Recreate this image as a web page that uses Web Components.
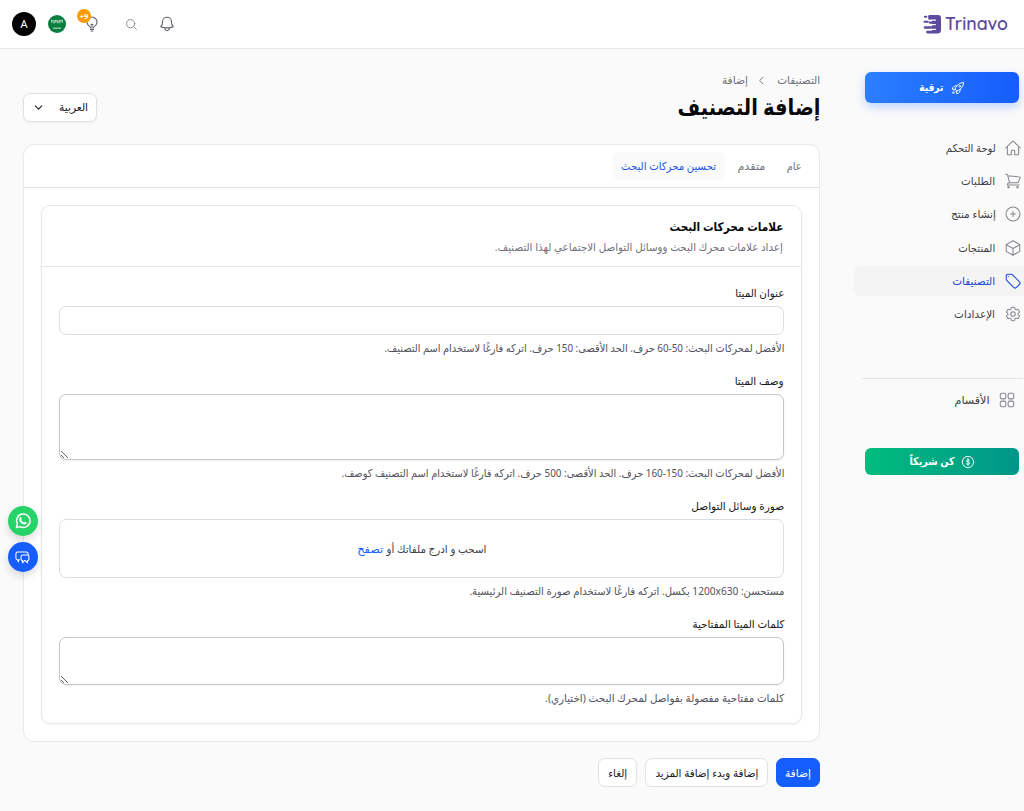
<!DOCTYPE html>
<html lang="ar" dir="rtl">
<head>
<meta charset="utf-8">
<title>إضافة التصنيف</title>
<style>
html,body{margin:0;height:811px;overflow:hidden}
body{background:#fafafa;color:#18181b;font-family:"Noto Sans","DejaVu Sans",sans-serif;font-size:11px}
</style>
</head>
<body>
<admin-page></admin-page>
<script>
const define = (name, html, setup) => customElements.define(name, class extends HTMLElement {
  connectedCallback() {
    if (this.shadowRoot) return;
    this.attachShadow({ mode: 'open' }).innerHTML = typeof html === 'function' ? html(this) : html;
    if (setup) setup(this);
  }
});

const icons = {
  home: '<path d="M2.25 12 11.2 3.05a1.1 1.1 0 0 1 1.6 0L21.75 12M4.5 9.75v10.1c0 .65.5 1.15 1.1 1.15h4.15v-4.9c0-.6.5-1.1 1.1-1.1h2.3c.6 0 1.1.5 1.1 1.1V21h4.15c.6 0 1.1-.5 1.1-1.15V9.75"/>',
  cart: '<path d="M2.25 3h1.4c.5 0 .95.35 1.1.85L7.5 14.25m0 0a3 3 0 0 0-3 3h15.75m-12.75-3h11.2c1.15-2.3 2.1-4.7 2.95-7.15A60 60 0 0 0 5.1 5.25"/><circle cx="6" cy="20.2" r=".9"/><circle cx="18" cy="20.2" r=".9"/>',
  plus: '<circle cx="12" cy="12" r="9.3"/><path d="M12 8.7v6.6M8.7 12h6.6"/>',
  cube: '<path d="m21 7.5-9-5.2-9 5.2m18 0-9 5.2m9-5.2v9l-9 5.2M3 7.5l9 5.2M3 7.5v9l9 5.2m0-9v9"/>',
  tag: '<path d="M9.6 3H5.25A2.25 2.25 0 0 0 3 5.25v4.3c0 .6.25 1.2.65 1.6l9.6 9.6c.7.7 1.8.85 2.6.3a18 18 0 0 0 5.2-5.2c.55-.85.4-1.9-.3-2.6l-9.6-9.6A2.3 2.3 0 0 0 9.6 3Z"/><path d="M6 6h.01"/>',
  gear: '<path d="M9.6 3.9c.1-.5.55-.9 1.1-.9h2.6c.55 0 1 .4 1.1.95l.2 1.25c.06.4.3.7.65.9l.2.13c.3.2.7.27 1.07.12l1.2-.45a1.1 1.1 0 0 1 1.4.5l1.3 2.2a1.1 1.1 0 0 1-.27 1.45l-1 .83c-.3.24-.44.6-.43 1v.24c0 .38.14.75.43 1l1 .82c.43.35.54.96.27 1.45l-1.3 2.2a1.1 1.1 0 0 1-1.4.5l-1.2-.45c-.35-.13-.75-.07-1.07.12l-.22.13c-.33.2-.58.5-.64.9l-.2 1.25c-.1.55-.55.95-1.1.95h-2.6c-.55 0-1-.4-1.1-.95l-.2-1.25c-.06-.4-.3-.7-.65-.9l-.2-.13a1.2 1.2 0 0 0-1.07-.12l-1.2.45a1.1 1.1 0 0 1-1.4-.5l-1.3-2.2a1.1 1.1 0 0 1 .27-1.45l1-.82c.3-.25.44-.62.43-1v-.24c0-.4-.13-.76-.43-1l-1-.83a1.1 1.1 0 0 1-.27-1.45l1.3-2.2a1.1 1.1 0 0 1 1.4-.5l1.2.45c.36.15.76.08 1.07-.12l.22-.13c.33-.2.58-.5.64-.9Z"/><circle cx="12" cy="12" r="3"/>',
  grid: '<rect x="3" y="3" width="7.5" height="7.5" rx="2.2"/><rect x="13.5" y="3" width="7.5" height="7.5" rx="2.2"/><rect x="3" y="13.5" width="7.5" height="7.5" rx="2.2"/><rect x="13.5" y="13.5" width="7.5" height="7.5" rx="2.2"/>',
  bell: '<path d="M14.9 17.1c1.8-.2 3.6-.6 5.4-1.3A9 9 0 0 1 18 9.75V9A6 6 0 0 0 6 9v.75a9 9 0 0 1-2.3 6c1.7.65 3.5 1.1 5.4 1.3m5.8 0a24 24 0 0 1-5.8 0m5.8 0a3 3 0 1 1-5.8 0"/>',
  search: '<circle cx="10.5" cy="10.5" r="7.5"/><path d="m21 21-5.2-5.2"/>',
  bulb: '<path d="M12 18v-5.25m0 0a6 6 0 0 0 1.5-.2m-1.5.2a6 6 0 0 1-1.5-.2m3.75 7.5a12 12 0 0 1-4.5 0m3.75 2.4a14 14 0 0 1-3 0M14.25 18v-.2c0-1 .66-1.8 1.5-2.3a7.5 7.5 0 1 0-7.5 0c.85.5 1.5 1.3 1.5 2.3v.2"/>',
  down: '<path d="m5 8.5 7 7 7-7"/>',
  left: '<path d="m15.5 4.5-7.5 7.5 7.5 7.5"/>',
  rocket: '<path d="M15.6 14.4a6 6 0 0 1-5.85 7.4v-4.8m5.85-2.6a15 15 0 0 0 6.15-12.1 15 15 0 0 0-12.1 6.1m5.95 6a15 15 0 0 1-5.85 2.6M9.65 8.4A6 6 0 0 0 2.25 14.2h4.8m2.6-5.8a15 15 0 0 0-2.6 5.8m2.7 2.8-.3.05a15 15 0 0 1-2.45-2.45l.05-.4m-2.25 2.4a4.5 4.5 0 0 0-1.75 4.35 4.5 4.5 0 0 0 4.3-1.75"/><circle cx="15" cy="9" r="1.5"/>',
  dollar: '<circle cx="12" cy="12" r="9.7"/><path d="M12 6v12M9 15.2c1.3 1.1 4.7 1.1 5.6-.2.8-1.2.1-2.5-2.6-3-2.6-.5-3.3-1.8-2.4-2.9 1-1.2 3.8-1.1 4.9-.1"/>',
  whatsapp: '<path d="M3.2 20.8 4.5 16A9 9 0 1 1 8 19.5z"/><path fill="currentColor" stroke="none" d="M8.2 7.1c.4-.4 1-.4 1.3.2l.8 1.8c.1.4-.1.8-.8 1.5.8 1.6 2 2.7 3.7 3.4.7-.9 1-1.2 1.5-1l1.8.9c.5.3.4.8.2 1.4-.4 1.1-1.9 1.7-3 1.4-3.5-.8-5.8-3-6.7-5.8-.4-1.5.3-3 1.2-3.8z"/>',
  chat: '<path d="M7.500 15.500H5.500v3.500L3.800 15.500A2.500 2.500 0 0 1 1.500 13V5.800a2.500 2.500 0 0 1 2.500-2.500h14.500A2.500 2.500 0 0 1 21 5.800V8"/><path d="M12 8h8a2.300 2.300 0 0 1 2.300 2.300v4.400A2.300 2.300 0 0 1 20 17v3.500L16.500 17H15l-3 3.500V17a2.300 2.300 0 0 1-2.300-2.300v-4.400A2.300 2.300 0 0 1 12 8Z"/>'
};

/* Line icon: name, size, weight */
define('line-icon', el => {
  const s = el.getAttribute('size') || 18;
  return `<style>:host{display:block;flex:none;width:${s}px;height:${s}px}svg{display:block}</style>
  <svg width="${s}" height="${s}" viewBox="0 0 24 24" fill="none" stroke="currentColor" stroke-width="${el.getAttribute('weight') || 1.4}" stroke-linecap="round" stroke-linejoin="round">${icons[el.getAttribute('name')]}</svg>`;
});

/* One-line label condensed to a fixed measure */
define('fit-text', `<style>
:host{display:block;flex:none;white-space:nowrap;line-height:16px;height:16px}
span{display:inline-block;transform-origin:100% 50%}
</style><span><slot></slot></span>`, el => {
  const w = +el.getAttribute('w'), span = el.shadowRoot.querySelector('span');
  el.style.width = w + 'px';
  span.style.transform = `scaleX(${w / span.getBoundingClientRect().width})`;
  if (getComputedStyle(el).direction === 'ltr') span.style.transformOrigin = '0 50%';
});

define('brand-logo', `<style>:host{display:flex;align-items:center;gap:3px;direction:ltr;color:#5b4a9e;font:600 18px Quicksand,Lato,sans-serif}
fit-text{line-height:22px;height:22px}svg{display:block}</style>
<svg width="19" height="19" viewBox="0 0 19 19"><path fill="currentColor" d="M6.500 0h9A2.700 2.700 0 0 1 18 2.700V15a3.500 3.500 0 0 1-3.500 3.500H4.500a1.400 1.400 0 0 1 0-2.800H9v-1.900H2a1.200 1.200 0 0 1 0-2.500h7V8.800H7a1.200 1.200 0 0 1 0-2.400h2V4.700H6.500a1.300 1.300 0 0 1-1.300-1.300V1.300A1.300 1.300 0 0 1 6.500 0Z"/><path d="M2 1.700h1.300M1.500 6.800h3.300" stroke="currentColor" stroke-width="2.100" stroke-linecap="round"/><path d="M8 5.200h4.500M9 9.700h3.300M8 14.300h4.500" stroke="#fff" stroke-width="1.200" stroke-linecap="round"/></svg>
<fit-text w="63">Trinavo</fit-text>`);

define('top-bar', `<style>
:host{display:flex;box-sizing:border-box;height:49px;align-items:center;justify-content:space-between;background:#fff;border-bottom:1px solid #e7e7e9;padding:0 16px 0 12px;color:#62626b}
.tools{display:flex;align-items:center}
.bulb{position:relative;margin:0 25px 0 18px}
.badge{position:absolute;left:-7px;top:-7px;width:14px;height:14px;border-radius:50%;background:#fe9a00;color:#fff;font:700 7.5px/14px "Noto Sans",sans-serif;text-align:center;direction:ltr}
.flag{display:block;margin-left:12px}
.search{margin-right:20px;color:#85858e}
.avatar{width:24px;height:24px;border-radius:50%;background:#000;color:#fff;font:11px/24px "Noto Sans",sans-serif;text-align:center}
</style>
<brand-logo></brand-logo>
<div class="tools">
<line-icon name="bell" size="18" weight="1.5"></line-icon>
<line-icon class="search" name="search" size="13" weight="1.7"></line-icon>
<div class="bulb"><line-icon name="bulb" size="16" weight="1.6"></line-icon><span class="badge">+9</span></div>
<svg class="flag" width="18" height="18" viewBox="0 0 18 18"><circle cx="9" cy="9" r="9" fill="#087f3f"/><path d="M3.500 4.500v3M5 5.500v2.300h2V5M8 4.800v3M9.500 6v1.800h2V5M13 4.800v3M14.500 4.500v3M4 5.800h10" stroke="#b7dbc8" stroke-width=".8" fill="none"/><path d="M5 13.200h8" stroke="#d9eee2" stroke-width=".9"/></svg>
<div class="avatar">A</div>
</div>`);

define('nav-item', el => `<style>
:host{display:flex;align-items:center;height:30px;margin-bottom:3.2px;gap:8.5px;padding-right:2px;color:#3f3f46;border-radius:6px 0 0 6px}
:host([active]){background:#f4f4f5;color:#1747d1}
line-icon{color:#85858e}:host([active]) line-icon{color:#1747d1}
</style><line-icon name="${el.getAttribute('icon')}" size="18"></line-icon><fit-text w="${el.getAttribute('w')}">${el.getAttribute('label')}</fit-text>`);

define('promo-button', el => `<style>
:host{display:flex;align-items:center;justify-content:center;gap:13px;box-sizing:border-box;border-radius:6px;color:#fff;font-weight:700;margin:0 5px 0 11px}
:host([tone=blue]){gap:7px;height:31px;background:linear-gradient(90deg,#2b7fff,#155dfc);box-shadow:0 4px 10px #2b7fff4d}
:host([tone=green]){gap:7px;height:27px;background:linear-gradient(90deg,#00bc7d,#009689)}
fit-text{margin-top:-1px}
</style><line-icon name="${el.getAttribute('icon')}" size="${el.getAttribute('size')}" weight="1.6"></line-icon><fit-text w="${el.getAttribute('w')}">${el.getAttribute('label')}</fit-text>`);

define('side-nav', `<style>
:host{display:block;width:170px;flex:none;padding-top:23px}
nav{margin-top:30px}
hr{border:0;border-top:1px solid #e4e4e7;margin:49px 1px 0 8px}
.sec{margin:6px 6px 33.5px 0}
</style>
<promo-button tone="blue" icon="rocket" size="14" w="24" label="ترقية"></promo-button>
<nav>
<nav-item icon="home" w="50" label="لوحة التحكم"></nav-item>
<nav-item icon="cart" w="34" label="الطلبات"></nav-item>
<nav-item icon="plus" w="45" label="إنشاء منتج"></nav-item>
<nav-item icon="cube" w="37" label="المنتجات"></nav-item>
<nav-item active icon="tag" w="43" label="التصنيفات"></nav-item>
<nav-item icon="gear" w="41" label="الإعدادات"></nav-item>
</nav>
<hr>
<nav-item class="sec" icon="grid" w="35" label="الأقسام"></nav-item>
<promo-button tone="green" icon="dollar" size="14" w="45" label="كن شريكاً"></promo-button>`);

define('page-heading', `<style>
:host{display:flex;justify-content:space-between;height:95px;box-sizing:border-box;padding-top:23px}
.crumbs{display:flex;align-items:center;color:#71717b;height:16px}
.crumbs line-icon{margin:0 10px 0 8px}
h1{margin:3px 0 0;font-size:23px;font-weight:700;color:#09090b}
h1 fit-text{height:30px;line-height:30px}
.lang{display:flex;align-items:center;justify-content:space-between;box-sizing:border-box;width:74px;height:29px;margin-top:21px;border:1px solid #e1e1e4;border-radius:7px;background:#fff;padding:0 8px 0 9px;box-shadow:0 1px 2px #0000000d}
.lang fit-text{margin-top:-1px}
</style>
<div><div class="crumbs"><fit-text w="43">التصنيفات</fit-text><line-icon name="left" size="11" weight="2"></line-icon><fit-text w="26">إضافة</fit-text></div>
<h1><fit-text w="143">إضافة التصنيف</fit-text></h1></div>
<div class="lang"><fit-text w="29">العربية</fit-text><line-icon name="down" size="11" weight="2.2"></line-icon></div>`);

define('tab-bar', `<style>
:host{display:flex;align-items:center;height:42px;border-bottom:1px solid #e4e4e7;padding:0 9px;color:#71717b;gap:4px}
div{padding:6px 8.5px;border-radius:6px}
.on{background:#fafafa;color:#1d55e0}
</style><div><fit-text w="15">عام</fit-text></div><div><fit-text w="28">متقدم</fit-text></div><div class="on"><fit-text w="95">تحسين محركات البحث</fit-text></div>`);

define('form-field', el => `<style>
:host{display:block;margin-bottom:17px}
.label{color:#18181b;font-weight:500}
.hint{color:#52525c;margin-top:5px}
.control{box-sizing:border-box;display:block;width:725px;margin:5px 0 0;background:#fff;border:1px solid #dedee2;border-radius:7px;height:${el.getAttribute('h')}px}
textarea.control{border-color:#c4c4c9;box-shadow:0 1px 2px #0000000d;padding:0;resize:vertical}
</style><fit-text class="label" w="${el.getAttribute('lw')}">${el.getAttribute('label')}</fit-text><slot>${el.hasAttribute('area') ? '<textarea class="control"></textarea>' : '<input class="control">'}</slot><fit-text class="hint" w="${el.getAttribute('hw')}">${el.getAttribute('hint')}</fit-text>`);

define('drop-zone', `<style>
:host{display:flex;box-sizing:border-box;width:725px;height:59px;margin-top:5px;align-items:center;justify-content:center;gap:3px;border:1px solid #dedee2;border-radius:7px;color:#3f3f46}
.link{color:#155dfc}</style><fit-text w="100">اسحب و ادرج ملفاتك أو</fit-text><fit-text class="link" w="26">تصفح</fit-text>`);

define('form-card', `<style>
:host{display:block;box-sizing:border-box;height:598px;background:#fff;border:1px solid #e9e9eb;border-radius:11px}
section{box-sizing:border-box;margin:17px 17px 0;height:519px;border:1px solid #e7e7e9;border-radius:9px;box-shadow:0 1px 2px #0000000d}
header{box-sizing:border-box;height:61px;padding:13px 18px 0;border-bottom:1px solid #e7e7e9}
.t{font-weight:700;font-size:12px;color:#09090b}.d{color:#71717b;margin-top:4px}
.body{padding:18px 17px 0}
</style>
<tab-bar></tab-bar>
<section><header><fit-text class="t" w="114">علامات محركات البحث</fit-text><fit-text class="d" w="288">إعداد علامات محرك البحث ووسائل التواصل الاجتماعي لهذا التصنيف.</fit-text></header>
<div class="body">
<form-field h="29" label="عنوان الميتا" lw="49" hw="400" hint="الأفضل لمحركات البحث: 50-60 حرف. الحد الأقصى: 150 حرف. اتركه فارغًا لاستخدام اسم التصنيف."></form-field>
<form-field area h="66" label="وصف الميتا" lw="49" hw="443" hint="الأفضل لمحركات البحث: 150-160 حرف. الحد الأقصى: 500 حرف. اتركه فارغًا لاستخدام اسم التصنيف كوصف."></form-field>
<form-field label="صورة وسائل التواصل" lw="93" hw="315" hint="مستحسن: 1200x630 بكسل. اتركه فارغًا لاستخدام صورة التصنيف الرئيسية."><drop-zone></drop-zone></form-field>
<form-field area h="48" label="كلمات الميتا المفتاحية" lw="92" hw="239" hint="كلمات مفتاحية مفصولة بفواصل لمحرك البحث (اختياري)."></form-field>
</div></section>`);

define('action-bar', `<style>
:host{display:flex;gap:8px;padding-top:16px}
button{all:unset;box-sizing:border-box;height:29px;display:flex;align-items:center;padding:0 9px;border:1px solid #e1e1e4;border-radius:7px;background:#fff;color:#18181b}
.primary{background:#155dfc;border-color:#155dfc;color:#fff;padding:0 8px}
</style><button class="primary"><fit-text w="26">إضافة</fit-text></button><button><fit-text w="103">إضافة وبدء إضافة المزيد</fit-text></button><button><fit-text w="19">إلغاء</fit-text></button>`);

define('float-actions', `<style>
:host{position:absolute;left:7.5px;top:506px;display:grid;gap:6px;color:#fff}
div{width:30px;height:30px;border-radius:50%;display:grid;place-items:center;box-shadow:0 4px 8px #00000024}
.w{background:#25d366}.c{background:#155dfc}
</style><div class="w"><line-icon name="whatsapp" size="18" weight="2"></line-icon></div><div class="c"><line-icon name="chat" size="15" weight="1.7"></line-icon></div>`);

define('admin-page', `<style>
:host{display:block;position:relative;height:811px;overflow:hidden}
.layout{display:flex;gap:34px}
main{width:797px;flex:none}
</style><top-bar></top-bar><div class="layout"><side-nav></side-nav><main><page-heading></page-heading><form-card></form-card><action-bar></action-bar></main></div><float-actions></float-actions>`);
</script>
</body>
</html>
